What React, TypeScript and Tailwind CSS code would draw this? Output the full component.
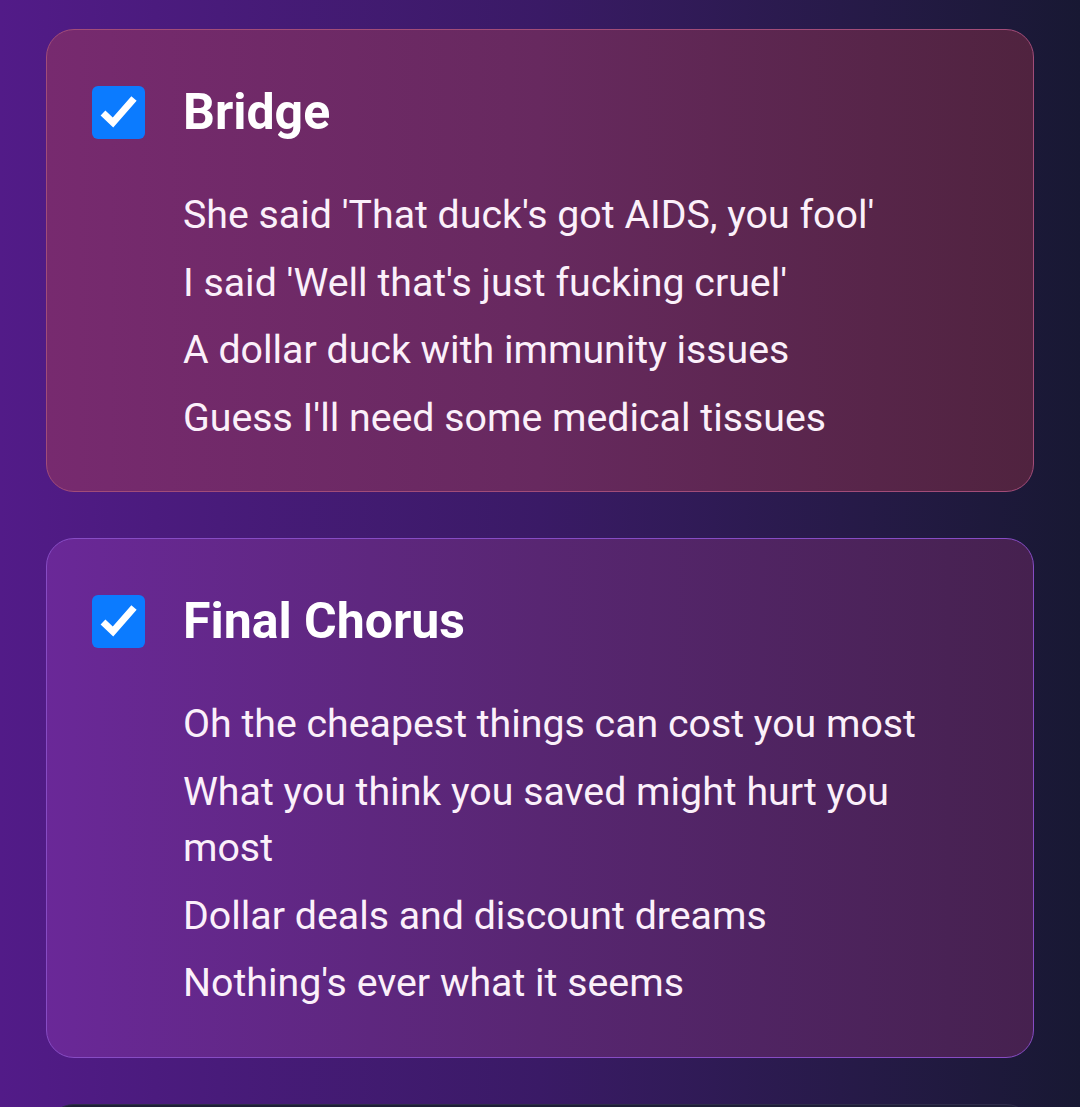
import React from "react";

type Section = {
  title: string;
  lines: string[];
  variant: "pink" | "purple";
};

const sections: Section[] = [
  {
    title: "Bridge",
    variant: "pink",
    lines: [
      "She said 'That duck's got AIDS, you fool'",
      "I said 'Well that's just fucking cruel'",
      "A dollar duck with immunity issues",
      "Guess I'll need some medical tissues",
    ],
  },
  {
    title: "Final Chorus",
    variant: "purple",
    lines: [
      "Oh the cheapest things can cost you most",
      "What you think you saved might hurt you most",
      "Dollar deals and discount dreams",
      "Nothing's ever what it seems",
    ],
  },
];

function CheckBox() {
  return (
    <div className="flex h-[53px] w-[53px] shrink-0 items-center justify-center rounded-[6px] bg-[#0b7bff]">
      <svg width="53" height="53" viewBox="0 0 53 53" fill="none">
        <path
          d="M11 27 L21 36.5 L42 12.5"
          stroke="white"
          strokeWidth="7"
          strokeLinecap="butt"
          strokeLinejoin="miter"
        />
      </svg>
    </div>
  );
}

function Card({ s }: { s: Section }) {
  const cls =
    s.variant === "pink"
      ? "border-[#a24c78] bg-gradient-to-r from-[#772a6f] via-[#67295f] to-[#50233f]"
      : "border-[#874cc4] bg-gradient-to-r from-[#6a2898] via-[#582672] to-[#46214f]";
  return (
    <div className={`rounded-[28px] border px-[45px] pt-[45px] pb-[45px] ${cls}`}>
      <div className="flex h-[75px] items-center gap-[38px]">
        <CheckBox />
        <h2 className="text-[50px] font-bold leading-[75px] text-white">{s.title}</h2>
      </div>
      <div className="mt-[37px] flex flex-col gap-[11px] pl-[91px] pr-[60px]">
        {s.lines.map((l, i) => (
          <p key={i} className="text-[39.3px] leading-[56.5px] text-[#fbf0fa]">
            {l}
          </p>
        ))}
      </div>
    </div>
  );
}

export default function App() {
  return (
    <div
      className="h-[1107px] w-[1080px] overflow-hidden bg-gradient-to-r from-[#521b88] via-[#3a1a66] to-[#181833] px-[46px] pt-[29px]"
      style={{ fontFamily: "Roboto, 'Noto Sans', sans-serif" }}
    >
      <div className="flex flex-col gap-[46px]">
        {sections.map((s) => (
          <Card key={s.title} s={s} />
        ))}
        <div className="h-[200px] rounded-[28px] border border-[#2e2c4a] bg-[#1f1e38]" />
      </div>
    </div>
  );
}
